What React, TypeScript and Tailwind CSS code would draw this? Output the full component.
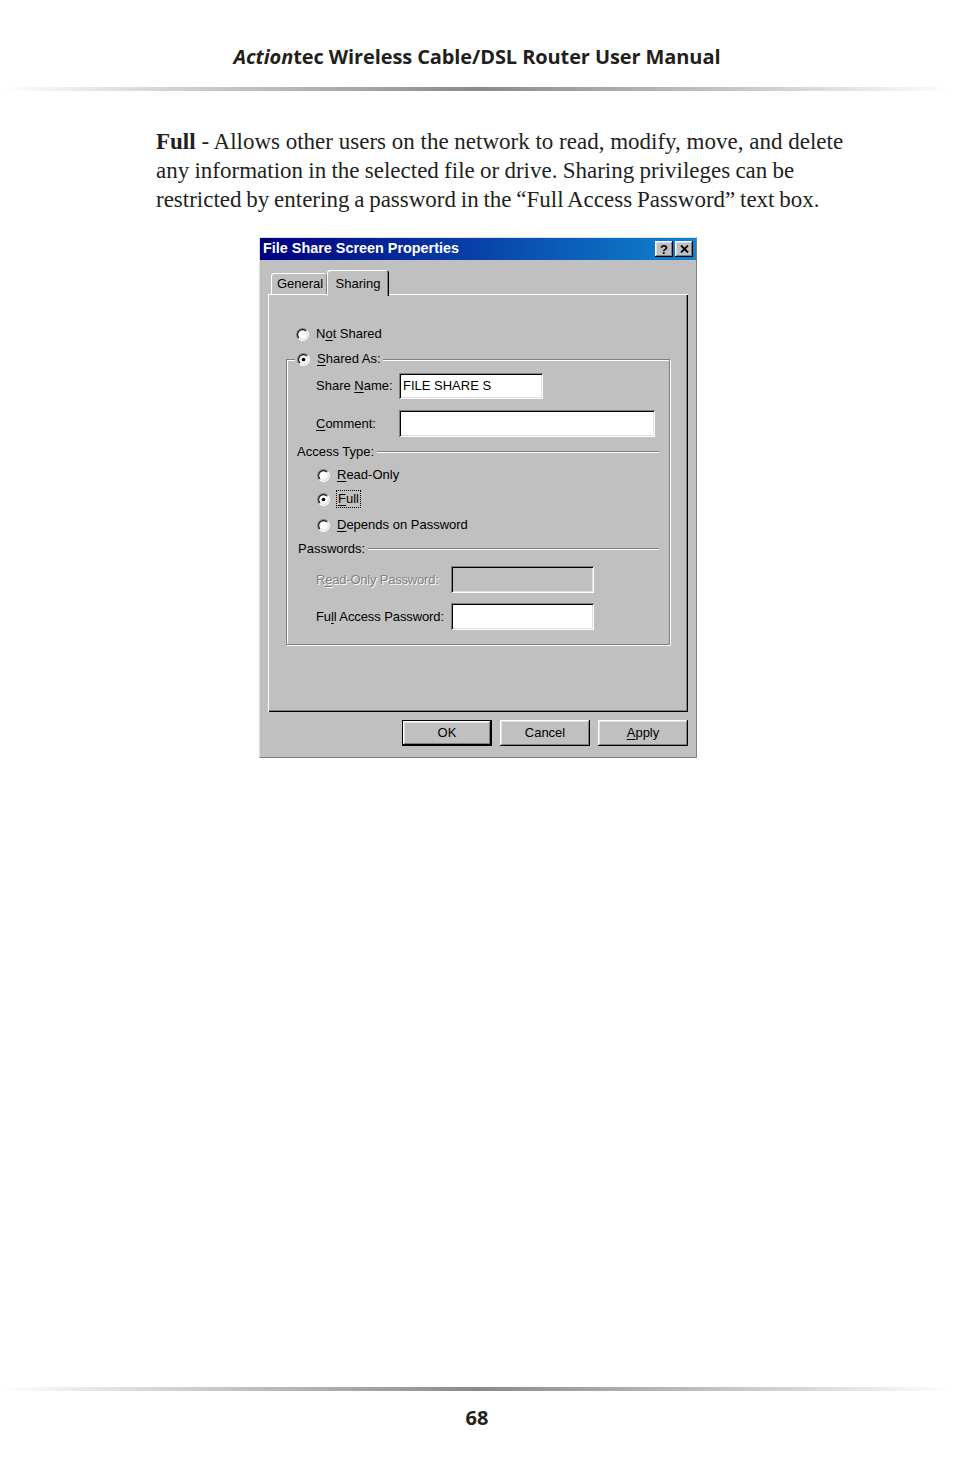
import React from 'react';

const ui = "font-['Liberation_Sans',Arial,sans-serif] text-[13px] text-black";
const raised =
    'shadow-[inset_-1px_-1px_0_#000,inset_1px_1px_0_#fff,inset_-2px_-2px_0_#808080,inset_2px_2px_0_#dfdfdf]';
const sunken =
    'shadow-[inset_1px_1px_0_#808080,inset_-1px_-1px_0_#fff,inset_2px_2px_0_#000,inset_-2px_-2px_0_#dfdfdf]';
const rule =
    'h-[4px] w-full bg-[linear-gradient(to_right,#ffffff,#d2d2d2_18%,#8a8a8a_50%,#d2d2d2_82%,#ffffff)]';

const Radio: React.FC<{ checked?: boolean }> = ({ checked }) => (
    <svg width="13" height="13" viewBox="0 0 12 12" className="shrink-0">
        <circle cx="6" cy="6" r="5" fill="#fff" />
        <path d="M2.111 9.889 A5.5 5.5 0 0 1 9.889 2.111" fill="none" stroke="#808080" strokeWidth="1" />
        <path d="M9.889 2.111 A5.5 5.5 0 0 1 2.111 9.889" fill="none" stroke="#fff" strokeWidth="1" />
        <path d="M2.818 9.182 A4.5 4.5 0 0 1 9.182 2.818" fill="none" stroke="#000" strokeWidth="1" />
        <path d="M9.182 2.818 A4.5 4.5 0 0 1 2.818 9.182" fill="none" stroke="#dfdfdf" strokeWidth="1" />
        {checked && <circle cx="6" cy="6" r="1.7" fill="#000" />}
    </svg>
);

// label with one underlined access key
const Key: React.FC<{ pre?: string; k: string; post?: string }> = ({ pre = '', k, post = '' }) => (
    <span>
        {pre}
        <span className="underline underline-offset-2">{k}</span>
        {post}
    </span>
);

const Etched = () => <div className="flex-1 h-[2px] border-t border-t-[#808080] border-b border-b-white" />;

const TitleButton: React.FC<{ children: React.ReactNode }> = ({ children }) => (
    <div className={`w-[18px] h-[16px] bg-[#c0c0c0] ${raised} flex items-center justify-center font-['Liberation_Sans',Arial,sans-serif] font-bold text-[13px] leading-none text-black`}>
        {children}
    </div>
);

const DlgButton: React.FC<{ children: React.ReactNode; def?: boolean }> = ({ children, def }) => (
    <div className={`w-[90px] h-[26px] bg-[#c0c0c0] ${raised} ${def ? 'border border-black' : ''} flex items-center justify-center`}>
        {children}
    </div>
);

const FileShareDialog = () => (
    <div className={`${ui} w-[438px] h-[521px] bg-[#c0c0c0] border border-t-[#dfdfdf] border-l-[#dfdfdf] border-r-[#808080] border-b-[#808080] flex flex-col`}>
        {/* Title bar */}
        <div className="h-[22px] bg-[linear-gradient(to_right,#000080,#1084d0)] flex items-center pl-[3px] pr-[3px]">
            <span className="flex-1 text-white font-bold text-[14.4px]">File Share Screen Properties</span>
            <div className="flex gap-[2px]">
                <TitleButton>?</TitleButton>
                <TitleButton>
                    <svg width="9" height="8" viewBox="0 0 9 8">
                        <path d="M1 0.5 L8 7.5 M8 0.5 L1 7.5" stroke="#000" strokeWidth="1.8" />
                    </svg>
                </TitleButton>
            </div>
        </div>

        {/* Tabs */}
        <div className="mt-[10px] ml-[11px] h-[24px] flex items-end">
            <div className="w-[56px] h-[21px] rounded-t-[3px] shadow-[inset_1px_1px_0_#fff,inset_-1px_0_0_#808080] flex items-center justify-center pt-[1px] pl-[2px]">
                General
            </div>
            <div className="relative z-10 -mb-[2px] w-[62px] h-[26px] bg-[#c0c0c0] rounded-t-[3px] shadow-[inset_1px_1px_0_#fff,inset_-1px_0_0_#000,inset_-2px_0_0_#808080] flex justify-center pt-[4px]">
                Sharing
            </div>
        </div>

        {/* Panel */}
        <div className="mx-[8px] h-[418px] shadow-[inset_1px_1px_0_#fff,inset_-1px_-1px_0_#000,inset_-2px_-2px_0_#808080] pt-[32px]">
            <div className="h-[16px] pl-[28px] flex items-center gap-[7px]">
                <Radio />
                <Key pre="N" k="o" post="t Shared" />
            </div>

            <div className="relative mt-[17px] mx-[18px] border border-[#808080] shadow-[inset_1px_1px_0_#fff,1px_1px_0_#fff] pb-[14px]">
                <div className="absolute left-[8px] -top-[9px] h-[16px] px-[2px] bg-[#c0c0c0] flex items-center gap-[7px]">
                    <Radio checked />
                    <Key k="S" post="hared As:" />
                </div>

                <div className="mt-[13px] h-[26px] pl-[29px] flex items-center">
                    <span className="w-[83px]"><Key pre="Share " k="N" post="ame:" /></span>
                    <div className={`w-[144px] h-full bg-white ${sunken} flex items-center pl-[4px]`}>FILE SHARE S</div>
                </div>

                <div className="mt-[11px] h-[27px] pl-[29px] flex items-center">
                    <span className="w-[83px]"><Key k="C" post="omment:" /></span>
                    <div className={`w-[256px] h-full bg-white ${sunken}`} />
                </div>

                <div className="mt-[7px] h-[16px] pl-[10px] pr-[10px] flex items-center gap-[3px]">
                    <span>Access Type:</span>
                    <Etched />
                </div>

                <div className="mt-[7px] h-[16px] pl-[30px] flex items-center gap-[7px]">
                    <Radio />
                    <Key k="R" post="ead-Only" />
                </div>
                <div className="mt-[8px] h-[16px] pl-[30px] flex items-center gap-[6px]">
                    <Radio checked />
                    <span className="border border-dotted border-black px-px leading-[16px]">
                        <Key k="F" post="ull" />
                    </span>
                </div>
                <div className="mt-[10px] h-[16px] pl-[30px] flex items-center gap-[7px]">
                    <Radio />
                    <Key k="D" post="epends on Password" />
                </div>

                <div className="mt-[8px] h-[16px] pl-[11px] pr-[10px] flex items-center gap-[3px]">
                    <span>Passwords:</span>
                    <Etched />
                </div>

                <div className="mt-[9px] h-[27px] pl-[29px] flex items-center">
                    <span className="w-[135px] text-[#808080] [text-shadow:1px_1px_0_#fff] tracking-[-0.2px]">
                        <Key pre="R" k="e" post="ad-Only Password:" />
                    </span>
                    <div className={`w-[143px] h-full bg-[#c0c0c0] ${sunken}`} />
                </div>

                <div className="mt-[10px] h-[27px] pl-[29px] flex items-center">
                    <span className="w-[135px] tracking-[-0.1px]"><Key pre="Fu" k="l" post="l Access Password:" /></span>
                    <div className={`w-[143px] h-full bg-white ${sunken}`} />
                </div>
            </div>
        </div>

        {/* Buttons */}
        <div className="mt-[8px] mr-[8px] flex justify-end gap-[8px]">
            <DlgButton def>OK</DlgButton>
            <DlgButton>Cancel</DlgButton>
            <DlgButton><Key k="A" post="pply" /></DlgButton>
        </div>
    </div>
);

export default function App() {
    return (
        <div className="w-[954px] min-h-[1475px] bg-white flex flex-col">
            {/* Header */}
            <div className="pt-[44px] text-center font-['Open_Sans',sans-serif] font-bold text-[20px] leading-[26px] tracking-[-0.1px] text-[#231f20]">
                <span className="italic">Action</span>tec Wireless Cable/DSL Router User Manual
            </div>
            <div className={`mt-[17px] ${rule}`} />

            {/* Body */}
            <p className="mt-[36px] ml-[156px] font-['Liberation_Serif','Times_New_Roman',serif] text-[23px] leading-[29px] text-[#231f20]">
                <span className="font-bold">Full</span> - Allows other users on the network to read, modify, move, and delete
                <br />
                <span className="[word-spacing:-0.5px]">any information in the selected file or drive. Sharing privileges can be</span>
                <br />
                <span className="[word-spacing:-1px]">restricted by entering a password in the “Full Access Password” text box.</span>
            </p>

            <div className="mt-[23px] ml-[259px]">
                <FileShareDialog />
            </div>

            {/* Footer */}
            <div className="mt-auto">
                <div className={rule} />
                <div className="mt-[15px] pb-[45px] text-center font-['Open_Sans',sans-serif] font-bold text-[20px] leading-[24px] text-[#231f20]">
                    68
                </div>
            </div>
        </div>
    );
}
